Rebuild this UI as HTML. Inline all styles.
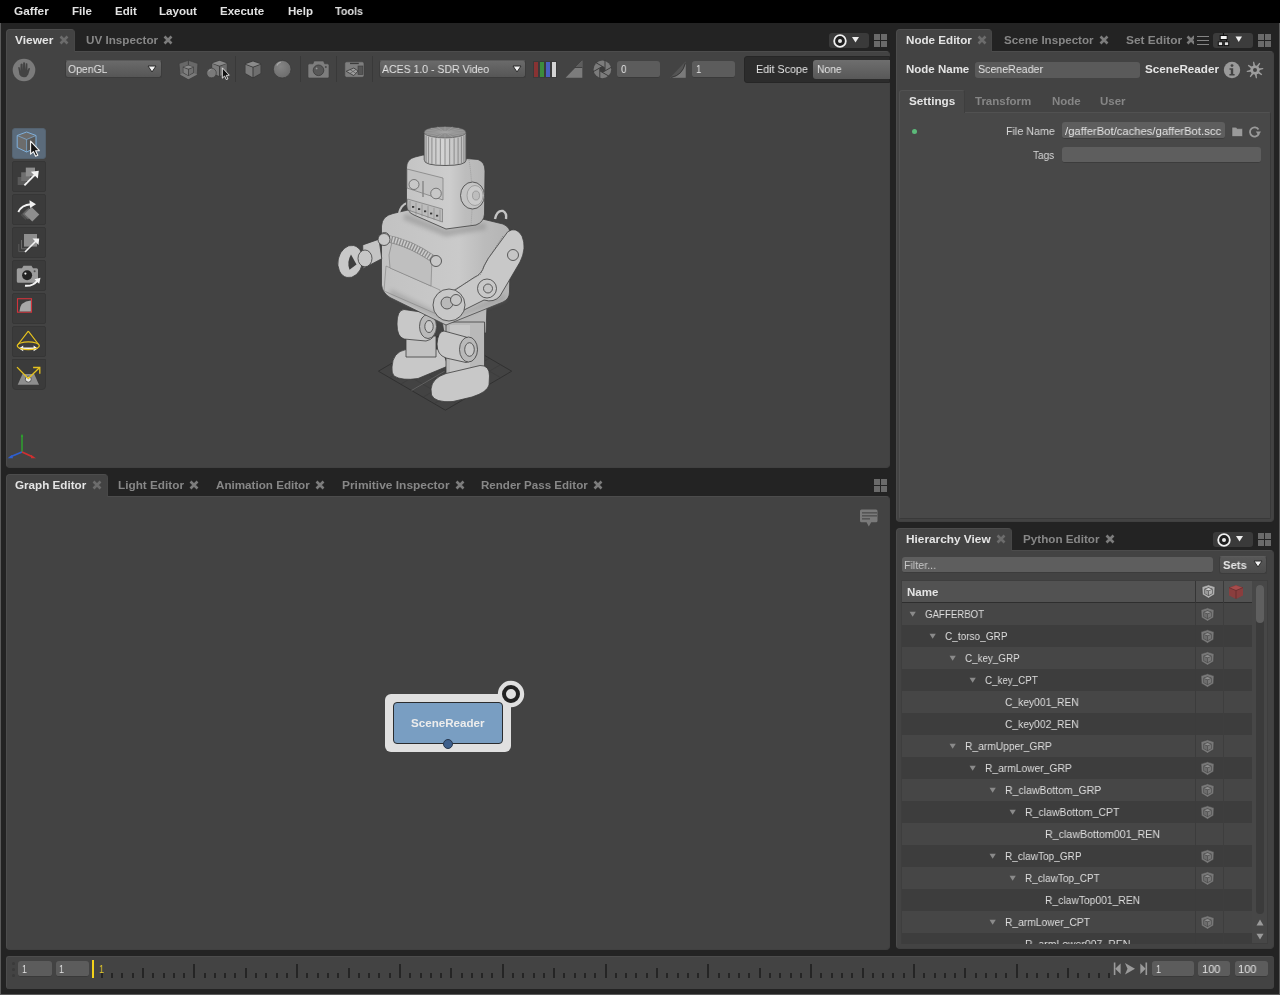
<!DOCTYPE html>
<html><head><meta charset="utf-8"><style>
*{margin:0;padding:0;box-sizing:border-box}
html,body{width:1280px;height:995px;overflow:hidden;background:#232323;font-family:"Liberation Sans",sans-serif;font-size:11px;color:#e0e0e0}
.a{position:absolute}
.t{position:absolute;white-space:nowrap;line-height:1;transform-origin:0 0;will-change:transform}
svg{position:absolute;overflow:visible}
</style></head><body>
<div class="a" style="left:0px;top:0px;width:1280px;height:23px;background:#000;"></div><div class="a" style="left:0px;top:23px;width:1px;height:972px;background:#5a5a5a;"></div><div class="a" style="left:1279px;top:23px;width:1px;height:972px;background:#5a5a5a;"></div><div class="a" style="left:0px;top:994px;width:1280px;height:1px;background:#5a5a5a;"></div><div class="t" style="left:14.00px;top:6.00px;font-size:11.5px;color:#e2e2e2;font-weight:bold;transform:scaleX(1.0258);">Gaffer</div><div class="t" style="left:71.50px;top:6.00px;font-size:11.5px;color:#e2e2e2;font-weight:bold;transform:scaleX(0.9811);">File</div><div class="t" style="left:114.50px;top:6.00px;font-size:11.5px;color:#e2e2e2;font-weight:bold;transform:scaleX(0.9885);">Edit</div><div class="t" style="left:159.00px;top:6.00px;font-size:11.5px;color:#e2e2e2;font-weight:bold;transform:scaleX(1.0066);">Layout</div><div class="t" style="left:220.30px;top:6.00px;font-size:11.5px;color:#e2e2e2;font-weight:bold;transform:scaleX(0.9904);">Execute</div><div class="t" style="left:287.50px;top:6.00px;font-size:11.5px;color:#e2e2e2;font-weight:bold;transform:scaleX(0.9849);">Help</div><div class="t" style="left:335.00px;top:6.00px;font-size:11.5px;color:#e2e2e2;font-weight:bold;transform:scaleX(0.9372);">Tools</div><div class="a" style="left:6px;top:51px;width:884px;height:417px;background:#434343;border-top:1px solid #4c4c4c;border-left:1px solid #4c4c4c;border-right:1px solid #414141;border-bottom:1px solid #404040;border-radius:0 4px 4px 4px"></div><div class="a" style="left:6px;top:29px;width:69px;height:23px;background:#434343;border-top:1px solid #4c4c4c;border-left:1px solid #4c4c4c;border-right:1px solid #474747;border-radius:4px 4px 0 0"></div><div class="t" style="left:15.30px;top:35.00px;font-size:11.5px;color:#e4e4e4;font-weight:bold;transform:scaleX(1.0414);">Viewer</div><svg style="left:58.5px;top:35.0px" width="10" height="10"><path d="M1.5 1.5 L8.5 8.5 M8.5 1.5 L1.5 8.5" stroke="#6c6c6c" stroke-width="2.6" stroke-linecap="butt"/></svg><div class="t" style="left:85.70px;top:35.00px;font-size:11.5px;color:#878787;font-weight:bold;transform:scaleX(1.0159);">UV Inspector</div><svg style="left:162.5px;top:35.0px" width="10" height="10"><path d="M1.5 1.5 L8.5 8.5 M8.5 1.5 L1.5 8.5" stroke="#7c7c7c" stroke-width="2.6" stroke-linecap="butt"/></svg><div class="a" style="left:829px;top:33px;width:40px;height:15px;background:#3a3a3a;border-radius:3px;"></div><svg style="left:831.5px;top:32.5px" width="16" height="16"><circle cx="8" cy="8" r="5.8" fill="#1e1e1e" stroke="#f0f0f0" stroke-width="1.8"/><circle cx="8" cy="8" r="2" fill="#e8e8e8"/></svg><svg style="left:852px;top:37px" width="8" height="6"><path d="M0 0 L7 0 L3.5 5.5 Z" fill="#eeeeee"/></svg><div class="a" style="left:874px;top:34px;width:13px;height:13px"><div class="a" style="left:0;top:0;width:6px;height:6px;background:#6a6a6a"></div><div class="a" style="left:7px;top:0;width:6px;height:6px;background:#6a6a6a"></div><div class="a" style="left:0;top:7px;width:6px;height:6px;background:#6a6a6a"></div><div class="a" style="left:7px;top:7px;width:6px;height:6px;background:#6a6a6a"></div></div><svg style="left:12px;top:58px" width="24" height="24" viewBox="0 0 24 24"><circle cx="12" cy="12" r="11.3" fill="#7b7b7b"/><path d="M6.2 9.5 L6.8 9 L7.8 9.5 L8.2 13 L8.6 6 L9.8 5.5 L10.6 6 L10.8 12 L11.2 4.6 L12.3 4.3 L13 4.8 L13.2 12 L13.8 5.3 L14.9 5.2 L15.4 5.8 L15.5 12.5 L16.5 10.3 L17.6 10 L18 10.8 L16.2 16.5 Q14.8 19.5 11.8 19.3 Q8.5 19.2 7.5 16.8 Z" fill="#434343"/></svg><div class="a" style="left:65px;top:60px;width:97px;height:18px;border-radius:3px;background:linear-gradient(#6a6a6a,#565656);border:1px solid #3c3c3c;border-top-color:#5a5a5a"></div><div class="t" style="left:68.20px;top:64.00px;font-size:11.5px;color:#e4e4e4;transform:scaleX(0.9080);">OpenGL</div><svg style="left:147px;top:65px" width="10" height="8"><path d="M1 1 L9 1 L5.0 7 Z" fill="#f2f2f2" stroke="#2a2a2a" stroke-width="1" stroke-linejoin="round"/></svg><div class="a" style="left:235px;top:56px;width:1px;height:26px;background:#393939;"></div><div class="a" style="left:300px;top:56px;width:1px;height:26px;background:#393939;"></div><div class="a" style="left:336px;top:56px;width:1px;height:26px;background:#393939;"></div><div class="a" style="left:372px;top:56px;width:1px;height:26px;background:#393939;"></div><svg style="left:178px;top:60px" width="21" height="20" viewBox="0 0 21 20"><path d="M10.4 0.3 L19.9 3.5 L19.3 14.4 L10.4 19.3 L1.9 14.4 L1 3.5 Z" fill="#686868" stroke="#3c3c3c" stroke-width="0.7"/><path d="M1.9 14.4 L10.4 10.8 L19.3 14.4 L10.4 19.3 Z" fill="#7a7a7a"/><path d="M10.4 0.3 L10.4 5" stroke="#3c3c3c" stroke-width="0.9"/><path d="M10.4 5 L15.8 6.8 L15.8 13 L10.4 16 L4.8 13 L4.8 6.8 Z" fill="#404040"/><path d="M10.4 5.6 L15.2 7.1 L10.4 8.8 L5.4 7.1 Z" fill="#8a8a8a"/><path d="M5.4 7.8 L10 9.4 L10 15.2 L5.4 12.6 Z" fill="#7e7e7e"/><path d="M10.8 9.4 L15.2 7.8 L15.2 12.6 L10.8 15.2 Z" fill="#707070"/></svg><svg style="left:205px;top:59px" width="25" height="22" viewBox="0 0 25 22"><path d="M14.5 1 L22.5 3.5 L22.5 14.5 L14.5 18 L6.5 14.5 L6.5 3.5 Z" fill="#3e3e3e"/><path d="M14.5 1.8 L21.8 4.2 L14.5 6.8 L7.2 4.2 Z" fill="#888"/><path d="M7.2 4.8 L14 7.4 L14 17 L7.2 14 Z" fill="#7a7a7a"/><path d="M15 7.4 L21.8 4.8 L21.8 14 L15 17 Z" fill="#6c6c6c"/><circle cx="6.5" cy="14" r="4.8" fill="#7a7a7a" stroke="#3e3e3e" stroke-width="0.7"/><path d="M3.8 12.5 Q4.5 10.5 6.5 10.2" stroke="#a0a0a0" stroke-width="0.8" fill="none"/><path d="M17.3 8.8 L17.3 19.2 L19.6 17 L21.3 20.6 L22.9 19.9 L21.3 16.4 L24.3 16.2 Z" fill="#111" stroke="#eee" stroke-width="0.9" stroke-linejoin="round"/></svg><svg style="left:244px;top:60px" width="18" height="19" viewBox="0 0 18 19"><path d="M9 0.6 L17.2 3.4 L17.2 13.6 L9 18.4 L0.8 13.6 L0.8 3.4 Z" fill="#3a3a3a"/><path d="M9 1.5 L16.3 4 L9 6.8 L1.7 4 Z" fill="#8a8a8a"/><path d="M1.5 4.8 L8.5 7.5 L8.5 17.3 L1.5 13.2 Z" fill="#7c7c7c"/><path d="M9.5 7.5 L16.5 4.8 L16.5 13.2 L9.5 17.3 Z" fill="#6e6e6e"/></svg><svg style="left:272px;top:59px" width="21" height="21" viewBox="0 0 21 21"><defs><radialGradient id="sg" cx="0.4" cy="0.35" r="0.7"><stop offset="0" stop-color="#858585"/><stop offset="1" stop-color="#6c6c6c"/></radialGradient></defs><circle cx="10.2" cy="10.2" r="8.8" fill="url(#sg)" stroke="#3c3c3c" stroke-width="0.8"/><path d="M4.8 6.5 Q6 4 8.8 3.2" stroke="#a8a8a8" stroke-width="1.2" fill="none"/></svg><svg style="left:307px;top:60px" width="23" height="20" viewBox="0 0 23 20"><path d="M2.5 3.8 L6 3.8 L7 1 L16.5 1 L17.7 3.8 L20.5 3.8 Q22 3.8 22 5.3 L22 16.5 Q22 18 20.5 18 L2.5 18 Q1 18 1 16.5 L1 5.3 Q1 3.8 2.5 3.8 Z" fill="#7e7e7e" stroke="#3e3e3e" stroke-width="0.6"/><circle cx="11.5" cy="10.3" r="5.3" fill="#585858" stroke="#3a3a3a" stroke-width="0.8"/><circle cx="9.6" cy="8.4" r="0.9" fill="#9a9a9a"/><circle cx="18.8" cy="7" r="1" fill="#4a4a4a"/></svg><svg style="left:344px;top:61px" width="21" height="17" viewBox="0 0 21 17"><rect x="0.8" y="0.8" width="19.2" height="15.5" rx="1.8" fill="#7e7e7e" stroke="#3e3e3e" stroke-width="0.6"/><rect x="6" y="1.8" width="8.8" height="1.3" fill="#3c3c3c"/><rect x="14" y="5" width="4.8" height="8.4" fill="#555" stroke="#3a3a3a" stroke-width="0.6"/><path d="M2.2 10.3 L9.8 7 L14 10 L9.8 14.6 Z" fill="#a0a0a0" stroke="#3e3e3e" stroke-width="0.9"/><path d="M6 8.6 L11.9 12.3 M11.9 8.5 L6 12.4" stroke="#4a4a4a" stroke-width="0.6"/></svg><div class="a" style="left:379px;top:60px;width:147px;height:18px;border-radius:3px;background:linear-gradient(#6a6a6a,#565656);border:1px solid #3c3c3c;border-top-color:#5a5a5a"></div><div class="t" style="left:381.90px;top:64.00px;font-size:11.5px;color:#e4e4e4;transform:scaleX(0.9125);">ACES 1.0 - SDR Video</div><svg style="left:512px;top:65px" width="10" height="8"><path d="M1 1 L9 1 L5.0 7 Z" fill="#f2f2f2" stroke="#2a2a2a" stroke-width="1" stroke-linejoin="round"/></svg><div class="a" style="left:533px;top:61px;width:5.5px;height:17px;background:#883333;border:0.5px solid #3a3a3a"></div><div class="a" style="left:539px;top:61px;width:5.5px;height:17px;background:#3d8c3d;border:0.5px solid #3a3a3a"></div><div class="a" style="left:545px;top:61px;width:5.5px;height:17px;background:#4a5fc0;border:0.5px solid #3a3a3a"></div><div class="a" style="left:551px;top:61px;width:5.5px;height:17px;background:#d4d4d4;border:0.5px solid #3a3a3a"></div><svg style="left:565px;top:60px" width="18" height="18" viewBox="0 0 18 18"><path d="M0.6 17.8 L17.3 17.8 L17.3 0.5 Z" fill="#7c7c7c"/><path d="M10.3 7.5 L17.3 0.5 L17.3 7.5 Z" fill="#5e5e5e"/><path d="M9.5 7.5 L17.3 7.5" stroke="#3c3c3c" stroke-width="0.9"/></svg><svg style="left:593px;top:60px" width="19" height="19" viewBox="0 0 19 19"><circle cx="9.4" cy="9.4" r="8.8" fill="#7c7c7c"/><circle cx="9.4" cy="9.4" r="2.6" fill="#3c3c3c"/><g stroke="#3c3c3c" stroke-width="1"><path d="M12.00 10.40 L12.00 -0.10"/><path d="M9.83 12.15 L18.93 6.90"/><path d="M7.23 11.15 L16.33 16.40"/><path d="M6.80 8.40 L6.80 18.90"/><path d="M8.97 6.65 L-0.13 11.90"/><path d="M11.57 7.65 L2.47 2.40"/></g></svg><div class="a" style="left:617px;top:61px;width:43px;height:17px;background:#5c5c5c;border-radius:3px;border-bottom:1px solid #3a3a3a"></div><div class="t" style="left:620.50px;top:64.00px;font-size:11.5px;color:#e4e4e4;transform:scaleX(0.8627);">0</div><svg style="left:669px;top:60px" width="18" height="19" viewBox="0 0 18 19"><path d="M1 17.7 L16.7 17.7 L16.7 1.2 Z" fill="#545454"/><path d="M2.5 17.7 Q13.5 15.5 16.7 3.5 L16.7 17.7 Z" fill="#7a7a7a"/><path d="M2.2 17.4 Q13.5 15.2 16.2 3.2" stroke="#383838" stroke-width="1" fill="none"/></svg><div class="a" style="left:692px;top:61px;width:43px;height:17px;background:#5c5c5c;border-radius:3px;border-bottom:1px solid #3a3a3a"></div><div class="t" style="left:695.60px;top:64.00px;font-size:11.5px;color:#e4e4e4;transform:scaleX(0.8471);">1</div><div class="a" style="left:744px;top:56px;width:146px;height:27px;background:#2c2c2c;border-radius:3px 0 0 3px;border:1px solid #262626"></div><div class="t" style="left:755.50px;top:64.00px;font-size:11.5px;color:#e4e4e4;transform:scaleX(0.9330);">Edit Scope</div><div class="a" style="left:813px;top:60px;width:77px;height:19px;border-radius:3px 0 0 3px;background:linear-gradient(#6e6e6e,#585858)"></div><div class="t" style="left:816.60px;top:64.00px;font-size:11.5px;color:#e4e4e4;transform:scaleX(0.8982);">None</div><div class="a" style="left:12px;top:128px;width:34px;height:31px;background:#5b6b7b;border-radius:3px;border:1px solid #54626f"></div><div class="a" style="left:12px;top:161px;width:34px;height:31px;background:#3b3b3b;border-radius:2px;border:1px solid #363636"></div><div class="a" style="left:12px;top:194px;width:34px;height:31px;background:#3b3b3b;border-radius:2px;border:1px solid #363636"></div><div class="a" style="left:12px;top:227px;width:34px;height:31px;background:#3b3b3b;border-radius:2px;border:1px solid #363636"></div><div class="a" style="left:12px;top:260px;width:34px;height:31px;background:#3b3b3b;border-radius:2px;border:1px solid #363636"></div><div class="a" style="left:12px;top:293px;width:34px;height:31px;background:#3b3b3b;border-radius:2px;border:1px solid #363636"></div><div class="a" style="left:12px;top:326px;width:34px;height:31px;background:#3b3b3b;border-radius:2px;border:1px solid #363636"></div><div class="a" style="left:12px;top:359px;width:34px;height:31px;background:#3b3b3b;border-radius:0 0 4px 4px;border:1px solid #363636"></div><svg style="left:12px;top:128px" width="34" height="31" viewBox="0 0 34 31"><path d="M5.2 7.5 L14.6 4 L24 7.5 L24 19.5 L14.6 24 L5.2 19.5 Z" fill="#6c6c6c"/><path d="M14.6 11.5 L24 7.5 L24 19.5 L14.6 24 Z" fill="#575757"/><path d="M5.2 7.5 L14.6 11.5 L24 7.5 M14.6 11.5 L14.6 24" stroke="#7fb0dc" stroke-width="0.7" fill="none"/><path d="M5.2 7.5 L14.6 4 L24 7.5 L24 19.5 L14.6 24 L5.2 19.5 Z" fill="none" stroke="#7fb0dc" stroke-width="1"/><path d="M18.6 13.2 L18.6 26.2 L21.4 23.6 L23.6 28.2 L25.8 27.2 L23.6 22.8 L27.4 22.6 Z" fill="#151515" stroke="#f4f4f4" stroke-width="1.1" stroke-linejoin="round"/></svg><svg style="left:12px;top:161px" width="34" height="31" viewBox="0 0 34 31"><rect x="5.7" y="16" width="8.3" height="8" fill="#595959"/><rect x="9.2" y="11.3" width="8.8" height="8.7" fill="#6f6f6f"/><rect x="13.8" y="6.6" width="9.2" height="8.8" fill="#8e8e8e"/><path d="M12.4 24.3 L23.5 13.2" stroke="#f2f2f2" stroke-width="1.9"/><path d="M18.8 10.8 L26.8 9.8 L25.8 17.6 Z" fill="#f2f2f2"/></svg><svg style="left:12px;top:194px" width="34" height="31" viewBox="0 0 34 31"><path d="M8.5 21 L14.5 15 L19.5 20 L13.5 26 Z" fill="#4c4c4c"/><path d="M10.5 20 L16.5 14 L22 19.5 L16 25.5 Z" fill="#666"/><path d="M12.5 20 L19.5 13 L27.3 20.5 L20.3 27.5 Z" fill="#8e8e8e"/><path d="M6.3 18 Q9.5 10.8 19 10.2" stroke="#f2f2f2" stroke-width="1.9" fill="none"/><path d="M17.5 6.2 L24 10.2 L18 14 Z" fill="#f2f2f2"/></svg><svg style="left:12px;top:227px" width="34" height="31" viewBox="0 0 34 31"><path d="M6.8 17 L6.8 24.6 L14.5 24.6" stroke="#5a5a5a" stroke-width="1" fill="none"/><path d="M9.5 13 L9.5 21.8 L17 21.8" stroke="#6a6a6a" stroke-width="1" fill="none"/><rect x="12" y="7" width="13" height="12.6" fill="#8e8e8e"/><path d="M13 25 L24.5 13.5" stroke="#f2f2f2" stroke-width="1.6"/><path d="M20.5 11.5 L27.2 11.5 L26.5 18 Z" fill="#f2f2f2"/></svg><svg style="left:12px;top:260px" width="34" height="31" viewBox="0 0 34 31"><path d="M6.3 8.2 L10 8.2 L11.5 5.7 L19.5 5.7 L21 8.2 L24.5 8.2 Q26 8.2 26 9.7 L26 21.3 Q26 22.8 24.5 22.8 L6.3 22.8 Q4.8 22.8 4.8 21.3 L4.8 9.7 Q4.8 8.2 6.3 8.2 Z" fill="#9c9c9c"/><circle cx="15.1" cy="15.3" r="5" fill="#232323"/><circle cx="13.4" cy="13.6" r="1.1" fill="#eee"/><circle cx="22.6" cy="11.3" r="1" fill="#555"/><path d="M13 25.8 Q21 26.5 25.5 20.5" stroke="#f4f4f4" stroke-width="2" fill="none"/><path d="M22.5 19.3 L28.5 17.8 L27.2 23.8 Z" fill="#f4f4f4"/></svg><svg style="left:12px;top:293px" width="34" height="31" viewBox="0 0 34 31"><rect x="5.5" y="5.7" width="14" height="13.5" fill="none" stroke="#d0343c" stroke-width="1.1"/><path d="M7.5 18.6 Q7.8 8.3 18.9 7.6 L18.9 18.6 Z" fill="#a8a8a8"/></svg><svg style="left:12px;top:326px" width="34" height="31" viewBox="0 0 34 31"><path d="M16.3 5.2 L6 18.5 M16.3 5.2 L26.6 18.5" stroke="#e6c21e" stroke-width="1.2" fill="none"/><path d="M8.6 22.4 L24 22.4" stroke="#f4f4f4" stroke-width="1.8"/><path d="M7 22.4 L11.2 19.6 L11.2 25.2 Z M25.8 22.4 L21.6 19.6 L21.6 25.2 Z" fill="#f4f4f4"/><ellipse cx="16.3" cy="19.8" rx="11" ry="3.9" fill="none" stroke="#e6c21e" stroke-width="1.2"/></svg><svg style="left:12px;top:359px" width="34" height="31" viewBox="0 0 34 31"><path d="M5.7 25.7 L10.5 15 L22.2 15 L27 25.7 Z" fill="#8e8e8e"/><circle cx="16.3" cy="20.2" r="3" fill="#e4e4e4" stroke="#555" stroke-width="1"/><path d="M5 8.1 L16.3 19.5 L27.6 8.5" stroke="#e6c21e" stroke-width="1.3" fill="none"/><path d="M21.1 8.5 L27.8 8.5 L27.8 14.7" stroke="#e6c21e" stroke-width="1.3" fill="none"/></svg><svg style="left:0px;top:425px" width="45" height="40" viewBox="0 0 45 40"><path d="M22 27 L22 10" stroke="#2ea02e" stroke-width="1.5"/><path d="M20.8 12 L22 8.5 L23.2 12 Z" fill="#2ea02e"/><path d="M22 27 L10 32" stroke="#2e5fd0" stroke-width="1.8"/><path d="M12 30 L7.5 33.2 L13 33.3 Z" fill="#2e5fd0"/><path d="M22 27 L33 32" stroke="#d03030" stroke-width="1.8"/><path d="M31 30 L36 33.2 L31 33.3 Z" fill="#d03030"/></svg><svg style="left:0px;top:0px" width="1280" height="995" viewBox="0 0 1280 995"><defs><linearGradient id="crg" x1="0" x2="1"><stop offset="0" stop-color="#bdbdbd"/><stop offset="0.35" stop-color="#d2d2d2"/><stop offset="1" stop-color="#b0b0b0"/></linearGradient><linearGradient id="hdg" x1="0" x2="1"><stop offset="0" stop-color="#c4c4c4"/><stop offset="0.55" stop-color="#cdcdcd"/><stop offset="0.75" stop-color="#bdbdbd"/><stop offset="1" stop-color="#b6b6b6"/></linearGradient><linearGradient id="tog" x1="0" x2="1"><stop offset="0" stop-color="#c2c2c2"/><stop offset="0.6" stop-color="#cacaca"/><stop offset="0.8" stop-color="#bbbbbb"/><stop offset="1" stop-color="#b4b4b4"/></linearGradient></defs><g stroke="#2c2c2c" stroke-width="0.8" fill="none"><path d="M378.4,371.2 L444.7,332.2 L511.7,371.2 L445.4,410.2 Z"/><path d="M389.4,364.7 L456.4,403.7" stroke-width="0.5" stroke="#393939"/><path d="M389.6,377.7 L455.9,338.7" stroke-width="0.5" stroke="#393939"/><path d="M400.5,358.2 L467.5,397.2" stroke-width="0.5" stroke="#393939"/><path d="M400.7,384.2 L467.0,345.2" stroke-width="0.5" stroke="#393939"/><path d="M411.5,351.7 L478.5,390.7" stroke-width="0.5" stroke="#393939"/><path d="M411.9,390.7 L478.2,351.7" stroke-width="0.5" stroke="#393939"/><path d="M422.6,345.2 L489.6,384.2" stroke-width="0.5" stroke="#393939"/><path d="M423.1,397.2 L489.4,358.2" stroke-width="0.5" stroke="#393939"/><path d="M433.6,338.7 L500.6,377.7" stroke-width="0.5" stroke="#393939"/><path d="M434.2,403.7 L500.5,364.7" stroke-width="0.5" stroke="#393939"/></g><path d="M411.5,390.5 L444.7,371.2" stroke="#6a6a6a" stroke-width="0.8"/><path d="M392,367 Q392.5,352 406,349.5 L442,349 L448,366 L418,378.5 Q402,381 394,376 Q391.5,373 392,367 Z" fill="#c8c8c8" stroke="#3c3c3c" stroke-width="0.8"/><path d="M406,336 L436,336 L436,357 L406,357 Z" fill="#c2c2c2" stroke="#3c3c3c" stroke-width="0.8"/><path d="M404,309.5 L428,313 Q437,316 437,327 Q436,339 426,341 L404,339 Q397,337 397,324 Q397,310 404,309.5 Z" fill="#c8c8c8" stroke="#3c3c3c" stroke-width="0.8"/><ellipse cx="428" cy="326.5" rx="8.5" ry="12" fill="#b9b9b9" stroke="#3c3c3c" stroke-width="0.8"/><ellipse cx="429" cy="326.5" rx="4.2" ry="6" fill="#c9c9c9" stroke="#3c3c3c" stroke-width="0.8"/><path d="M441,314 L487,305 L486,333 L444,333 Z" fill="#b9b9b9" stroke="#3c3c3c" stroke-width="0.8"/><path d="M446,322 L484.5,322 L484.5,380 L446,380 Z" fill="#b9b9b9" stroke="#3c3c3c" stroke-width="0.8"/><path d="M450,325 L470,325 L470,378 L450,378 Z" fill="#c6c6c6"/><path d="M431,389 Q432,378 446,373.5 L480,365.5 Q489.5,365 489.5,376 L489,385 Q487.5,392 472,397 L453,401.5 Q435,403 431.5,395 Z" fill="#c8c8c8" stroke="#3c3c3c" stroke-width="0.8"/><path d="M444,331 L466,337 Q477,341 477,350 Q476,361 466,362.5 L446,358 Q437,355 437,344 Q438,331 444,331 Z" fill="#c8c8c8" stroke="#3c3c3c" stroke-width="0.8"/><ellipse cx="468.5" cy="349.5" rx="9" ry="12.5" fill="#b9b9b9" stroke="#3c3c3c" stroke-width="0.8"/><ellipse cx="469.5" cy="349.5" rx="4.8" ry="6.8" fill="#c8c8c8" stroke="#3c3c3c" stroke-width="0.8"/><path d="M381.5,226 Q382,216 393,213.5 L408,210 L470,216 L503,224 Q511,227.5 510.5,236 L509.5,292 Q509.5,299 503,302 L446,325 L390,297.5 Q382.5,293 381.5,285 Z" fill="url(#tog)" stroke="#3c3c3c" stroke-width="0.8"/><defs><filter id="bl" x="-20%" y="-50%" width="140%" height="200%"><feGaussianBlur stdDeviation="2.2"/></filter></defs><path d="M404,216 L446,233 L486,226" stroke="#8e8e8e" stroke-width="7" fill="none" opacity="0.55" filter="url(#bl)"/><path d="M390,292 L446,320 L505,297" stroke="#8e8e8e" stroke-width="6" fill="none" opacity="0.45" filter="url(#bl)"/><path d="M384,291 L386,266 L440,290 L441,316 Z" fill="none" stroke="#808080" stroke-width="0.6"/><path d="M389,255 L392,242 L432,258 L431,286 L390,268 Z" fill="#bfbfbf" stroke="#7a7a7a" stroke-width="0.6"/><path d="M384,238 Q410,242 436,261" stroke="#8c8c8c" stroke-width="7.5" fill="none"/><path d="M384,238 Q410,242 436,261" stroke="#cccccc" stroke-width="6" stroke-dasharray="1.6 1.3" fill="none"/><circle cx="384.5" cy="237.5" r="5" fill="#c8c8c8" stroke="#3c3c3c" stroke-width="0.8"/><circle cx="436" cy="261" r="5.5" fill="#c8c8c8" stroke="#3c3c3c" stroke-width="0.8"/><path d="M495,219 Q497,210 503,211 Q507,213 506,219" stroke="#c4c4c4" stroke-width="2.4" fill="none"/><path d="M507.8,231.7 Q516,226 522,236 Q527,248 520,262 L500,296 Q494,303 484,300 L458,313 Q447,318 440,311 Q437,302 446,296 L474,277.5 Q482,274 484,266 L488.4,258.2 Z" fill="#c8c8c8" stroke="#3c3c3c" stroke-width="0.8"/><path d="M503,236 L486,262 L481,274 L452,291" stroke="#6a6a6a" stroke-width="0.7" fill="none" stroke-dasharray="1 1.2"/><circle cx="513" cy="255" r="5.5" fill="#c6c6c6" stroke="#3c3c3c" stroke-width="0.8"/><circle cx="487" cy="288.5" r="9.5" fill="#c8c8c8" stroke="#3c3c3c" stroke-width="0.8"/><circle cx="488" cy="288.5" r="4.5" fill="#c4c4c4" stroke="#3c3c3c" stroke-width="0.8"/><circle cx="449" cy="305" r="16" fill="#c8c8c8" stroke="#3c3c3c" stroke-width="0.8"/><circle cx="447" cy="303" r="6" fill="#b9b9b9" stroke="#3c3c3c" stroke-width="0.8"/><circle cx="456" cy="300" r="5.5" fill="#c6c6c6" stroke="#3c3c3c" stroke-width="0.8"/><path d="M362.7,244.9 L379,239.2 L381.8,258.7 L363.3,268.4 Z" fill="#c4c4c4" stroke="#3c3c3c" stroke-width="0.8"/><ellipse cx="350.3" cy="261.5" rx="12.3" ry="16.3" transform="rotate(12 350.3 261.5)" fill="#c8c8c8" stroke="#3c3c3c" stroke-width="0.8"/><path d="M351,254.5 L356.5,264.5 L349.5,269.8 Q346.5,262 351,254.5 Z" fill="#3e3e3e"/><ellipse cx="365" cy="258.4" rx="7" ry="8.4" fill="#c6c6c6" stroke="#3c3c3c" stroke-width="0.8"/><circle cx="384" cy="239.5" r="6" fill="#c8c8c8" stroke="#3c3c3c" stroke-width="0.8"/><path d="M399,213 Q401,205 407,203" stroke="#c0c0c0" stroke-width="2" fill="none"/><path d="M406.5,168 Q406.5,159 415,157 L423,155 L478,159.5 Q485,162 485,171 L484.5,214 Q484,222 476,225 L446,229 L414,215 Q407,212 406.5,205 Z" fill="url(#hdg)" stroke="#3c3c3c" stroke-width="0.8"/><path d="M407,169 L443,178 L443,200 L407,188 Z" fill="#c2c2c2" stroke="#6c6c6c" stroke-width="0.6"/><circle cx="414" cy="184.5" r="5" fill="#c8c8c8" stroke="#555" stroke-width="0.7"/><circle cx="436" cy="193.5" r="5.3" fill="#c8c8c8" stroke="#555" stroke-width="0.7"/><path d="M423,181 L423,197" stroke="#888" stroke-width="1.5"/><path d="M407.5,199 L442.5,209 L442.5,222 L408,210 Z" fill="#bcbcbc" stroke="#6a6a6a" stroke-width="0.6"/><g fill="#3a3a3a"><rect x="412" y="206.0" width="2.2" height="1.8"/><rect x="418" y="208.2" width="2.2" height="1.8"/><rect x="424" y="210.4" width="2.2" height="1.8"/><rect x="430" y="212.6" width="2.2" height="1.8"/><rect x="436" y="214.8" width="2.2" height="1.8"/></g><g stroke="#7a7a7a" stroke-width="0.5"><path d="M410,201.0 L410,213.0"/><path d="M416,202.7 L416,214.7"/><path d="M422,204.4 L422,216.4"/><path d="M428,206.1 L428,218.1"/><path d="M434,207.8 L434,219.8"/><path d="M440,209.5 L440,221.5"/></g><path d="M469,160 Q474,190 471,225" stroke="#8a8a8a" stroke-width="0.6" fill="none" stroke-dasharray="1 1"/><ellipse cx="472.5" cy="195.5" rx="12" ry="13.5" fill="#c4c4c4" stroke="#3c3c3c" stroke-width="0.8"/><ellipse cx="475" cy="195.5" rx="8" ry="10" fill="#cbcbcb" stroke="#777" stroke-width="0.5"/><ellipse cx="476" cy="195.5" rx="3.5" ry="4.5" fill="#bdbdbd" stroke="#777" stroke-width="0.5"/><defs><linearGradient id="crg2" x1="0" x2="1"><stop offset="0" stop-color="#c4c4c4"/><stop offset="0.45" stop-color="#d4d4d4"/><stop offset="1" stop-color="#bababa"/></linearGradient></defs><path d="M424.2,132 L424.2,160 Q424.2,165.5 445,165.5 Q466.2,165.5 466.2,160 L466.2,132 Z" fill="url(#crg2)" stroke="#3c3c3c" stroke-width="0.8"/><g stroke="#7c7c7c" stroke-width="0.8"><path d="M424.53,134.29 L424.53,161.11"/><path d="M426.08,135.52 L426.08,162.17"/><path d="M428.58,136.62 L428.58,163.12"/><path d="M431.91,137.53 L431.91,163.91"/><path d="M435.89,138.23 L435.89,164.50"/><path d="M440.33,138.65 L440.33,164.87"/><path d="M445.00,138.80 L445.00,165.00"/><path d="M449.67,138.65 L449.67,164.87"/><path d="M454.11,138.23 L454.11,164.50"/><path d="M458.09,137.53 L458.09,163.91"/><path d="M461.42,136.62 L461.42,163.12"/><path d="M463.92,135.52 L463.92,162.17"/><path d="M465.47,134.29 L465.47,161.11"/></g><ellipse cx="445" cy="132.2" rx="21" ry="5.8" fill="#8c8c8c" stroke="#4a4a4a" stroke-width="0.6"/><g stroke="#a6a6a6" stroke-width="0.6"><path d="M445,132.2 L465.0,132.2"/><path d="M445,132.2 L463.5,134.3"/><path d="M445,132.2 L459.1,136.1"/><path d="M445,132.2 L452.7,137.3"/><path d="M445,132.2 L445.0,137.7"/><path d="M445,132.2 L437.3,137.3"/><path d="M445,132.2 L430.9,136.1"/><path d="M445,132.2 L426.5,134.3"/><path d="M445,132.2 L425.0,132.2"/><path d="M445,132.2 L426.5,130.1"/><path d="M445,132.2 L430.9,128.3"/><path d="M445,132.2 L437.3,127.1"/><path d="M445,132.2 L445.0,126.7"/><path d="M445,132.2 L452.7,127.1"/><path d="M445,132.2 L459.1,128.3"/><path d="M445,132.2 L463.5,130.1"/></g></svg><div class="a" style="left:6px;top:496px;width:884px;height:454px;background:#434343;border-top:1px solid #4c4c4c;border-left:1px solid #4c4c4c;border-right:1px solid #414141;border-bottom:1px solid #404040;border-radius:0 4px 4px 4px"></div><div class="a" style="left:6px;top:474px;width:102px;height:23px;background:#434343;border-top:1px solid #4c4c4c;border-left:1px solid #4c4c4c;border-right:1px solid #474747;border-radius:4px 4px 0 0"></div><div class="t" style="left:15.00px;top:480.00px;font-size:11.5px;color:#e4e4e4;font-weight:bold;transform:scaleX(1.0142);">Graph Editor</div><svg style="left:91.5px;top:480.0px" width="10" height="10"><path d="M1.5 1.5 L8.5 8.5 M8.5 1.5 L1.5 8.5" stroke="#6c6c6c" stroke-width="2.6" stroke-linecap="butt"/></svg><div class="t" style="left:118.25px;top:480.00px;font-size:11.5px;color:#878787;font-weight:bold;transform:scaleX(1.0233);">Light Editor</div><svg style="left:189.25px;top:480.0px" width="10" height="10"><path d="M1.5 1.5 L8.5 8.5 M8.5 1.5 L1.5 8.5" stroke="#7c7c7c" stroke-width="2.6" stroke-linecap="butt"/></svg><div class="t" style="left:216.25px;top:480.00px;font-size:11.5px;color:#878787;font-weight:bold;transform:scaleX(1.0121);">Animation Editor</div><svg style="left:314.5px;top:480.0px" width="10" height="10"><path d="M1.5 1.5 L8.5 8.5 M8.5 1.5 L1.5 8.5" stroke="#7c7c7c" stroke-width="2.6" stroke-linecap="butt"/></svg><div class="t" style="left:342.00px;top:480.00px;font-size:11.5px;color:#878787;font-weight:bold;transform:scaleX(1.0386);">Primitive Inspector</div><svg style="left:454.5px;top:480.0px" width="10" height="10"><path d="M1.5 1.5 L8.5 8.5 M8.5 1.5 L1.5 8.5" stroke="#7c7c7c" stroke-width="2.6" stroke-linecap="butt"/></svg><div class="t" style="left:481.25px;top:480.00px;font-size:11.5px;color:#878787;font-weight:bold;transform:scaleX(1.0059);">Render Pass Editor</div><svg style="left:592.5px;top:480.0px" width="10" height="10"><path d="M1.5 1.5 L8.5 8.5 M8.5 1.5 L1.5 8.5" stroke="#7c7c7c" stroke-width="2.6" stroke-linecap="butt"/></svg><div class="a" style="left:874px;top:479px;width:13px;height:13px"><div class="a" style="left:0;top:0;width:6px;height:6px;background:#6a6a6a"></div><div class="a" style="left:7px;top:0;width:6px;height:6px;background:#6a6a6a"></div><div class="a" style="left:0;top:7px;width:6px;height:6px;background:#6a6a6a"></div><div class="a" style="left:7px;top:7px;width:6px;height:6px;background:#6a6a6a"></div></div><div class="a" style="left:896px;top:51px;width:378px;height:471px;background:#434343;border-top:1px solid #4c4c4c;border-left:1px solid #4c4c4c;border-right:1px solid #414141;border-bottom:1px solid #404040;border-radius:0 4px 4px 4px"></div><div class="a" style="left:896px;top:29px;width:96px;height:23px;background:#434343;border-top:1px solid #4c4c4c;border-left:1px solid #4c4c4c;border-right:1px solid #474747;border-radius:4px 4px 0 0"></div><div class="t" style="left:905.70px;top:35.00px;font-size:11.5px;color:#e4e4e4;font-weight:bold;transform:scaleX(1.0104);">Node Editor</div><svg style="left:976.5px;top:35.0px" width="10" height="10"><path d="M1.5 1.5 L8.5 8.5 M8.5 1.5 L1.5 8.5" stroke="#6c6c6c" stroke-width="2.6" stroke-linecap="butt"/></svg><div class="t" style="left:1003.80px;top:35.00px;font-size:11.5px;color:#878787;font-weight:bold;transform:scaleX(1.0082);">Scene Inspector</div><svg style="left:1098.5px;top:35.0px" width="10" height="10"><path d="M1.5 1.5 L8.5 8.5 M8.5 1.5 L1.5 8.5" stroke="#7c7c7c" stroke-width="2.6" stroke-linecap="butt"/></svg><div class="t" style="left:1125.70px;top:35.00px;font-size:11.5px;color:#878787;font-weight:bold;transform:scaleX(1.0354);">Set Editor</div><svg style="left:1185.5px;top:35.0px" width="10" height="10"><path d="M1.5 1.5 L8.5 8.5 M8.5 1.5 L1.5 8.5" stroke="#7c7c7c" stroke-width="2.6" stroke-linecap="butt"/></svg><div class="a" style="left:1194px;top:29px;width:19px;height:22px;background:#232323;"></div><div class="a" style="left:1197px;top:35.6px;width:12px;height:1.6000000000000014px;background:#858585;"></div><div class="a" style="left:1197px;top:39.6px;width:12px;height:1.6000000000000014px;background:#858585;"></div><div class="a" style="left:1197px;top:43.6px;width:12px;height:1.6000000000000014px;background:#858585;"></div><div class="a" style="left:1213px;top:33px;width:40px;height:15px;background:#3c3c3c;border-radius:3px;"></div><svg style="left:1216px;top:32px" width="16" height="16" viewBox="0 0 16 16"><path d="M7.5 1 L7.5 4" stroke="#111" stroke-width="1"/><rect x="4.2" y="3.5" width="7" height="4" fill="#f0f0f0" stroke="#111" stroke-width="1"/><path d="M5 8 L5 10 M10.5 8 L10.5 10" stroke="#111" stroke-width="1"/><rect x="2.3" y="9.8" width="4.4" height="3.8" fill="#e0e0e0" stroke="#111" stroke-width="1"/><rect x="8.3" y="9.8" width="4.4" height="3.8" fill="#e0e0e0" stroke="#111" stroke-width="1"/></svg><svg style="left:1235px;top:36px" width="8" height="7"><path d="M0.5 0.5 L7 0.5 L3.75 6 Z" fill="#f0f0f0"/></svg><div class="a" style="left:1258px;top:34px;width:13px;height:13px"><div class="a" style="left:0;top:0;width:6px;height:6px;background:#6a6a6a"></div><div class="a" style="left:7px;top:0;width:6px;height:6px;background:#6a6a6a"></div><div class="a" style="left:0;top:7px;width:6px;height:6px;background:#6a6a6a"></div><div class="a" style="left:7px;top:7px;width:6px;height:6px;background:#6a6a6a"></div></div><div class="a" style="left:896px;top:550px;width:378px;height:399px;background:#434343;border-top:1px solid #4c4c4c;border-left:1px solid #4c4c4c;border-right:1px solid #414141;border-bottom:1px solid #404040;border-radius:0 4px 4px 4px"></div><div class="a" style="left:896px;top:528px;width:116px;height:23px;background:#434343;border-top:1px solid #4c4c4c;border-left:1px solid #4c4c4c;border-right:1px solid #474747;border-radius:4px 4px 0 0"></div><div class="t" style="left:905.50px;top:534.00px;font-size:11.5px;color:#e4e4e4;font-weight:bold;transform:scaleX(1.0286);">Hierarchy View</div><svg style="left:995.5px;top:534.0px" width="10" height="10"><path d="M1.5 1.5 L8.5 8.5 M8.5 1.5 L1.5 8.5" stroke="#6c6c6c" stroke-width="2.6" stroke-linecap="butt"/></svg><div class="t" style="left:1022.50px;top:534.00px;font-size:11.5px;color:#878787;font-weight:bold;transform:scaleX(1.0149);">Python Editor</div><svg style="left:1104.5px;top:534.0px" width="10" height="10"><path d="M1.5 1.5 L8.5 8.5 M8.5 1.5 L1.5 8.5" stroke="#7c7c7c" stroke-width="2.6" stroke-linecap="butt"/></svg><div class="a" style="left:1213px;top:532px;width:40px;height:15px;background:#3a3a3a;border-radius:3px;"></div><svg style="left:1215.5px;top:531.5px" width="16" height="16"><circle cx="8" cy="8" r="5.8" fill="#1e1e1e" stroke="#f0f0f0" stroke-width="1.8"/><circle cx="8" cy="8" r="2" fill="#e8e8e8"/></svg><svg style="left:1236px;top:536px" width="8" height="6"><path d="M0 0 L7 0 L3.5 5.5 Z" fill="#eeeeee"/></svg><div class="a" style="left:1258px;top:533px;width:13px;height:13px"><div class="a" style="left:0;top:0;width:6px;height:6px;background:#6a6a6a"></div><div class="a" style="left:7px;top:0;width:6px;height:6px;background:#6a6a6a"></div><div class="a" style="left:0;top:7px;width:6px;height:6px;background:#6a6a6a"></div><div class="a" style="left:7px;top:7px;width:6px;height:6px;background:#6a6a6a"></div></div><div class="t" style="left:905.70px;top:64.00px;font-size:11.5px;color:#e4e4e4;font-weight:bold;">Node Name</div><div class="a" style="left:975px;top:62px;width:165px;height:16px;background:#5a5a5a;border-radius:3px"></div><div class="t" style="left:977.50px;top:64.00px;font-size:11.5px;color:#e4e4e4;transform:scaleX(0.9250);">SceneReader</div><div class="t" style="left:1145.00px;top:64.00px;font-size:11.5px;color:#e4e4e4;font-weight:bold;transform:scaleX(1.0154);">SceneReader</div><svg style="left:1223px;top:61px" width="18" height="18" viewBox="0 0 18 18"><circle cx="9" cy="9" r="8.2" fill="#9a9a9a"/><circle cx="9" cy="4.6" r="1.4" fill="#434343"/><path d="M6.5 7.2 L10.2 7.2 L10.2 13 L11.6 13 L11.6 14.5 L6.4 14.5 L6.4 13 L7.8 13 L7.8 8.7 L6.5 8.7 Z" fill="#434343"/></svg><svg style="left:1246px;top:61px" width="18" height="18" viewBox="0 0 18 18"><polygon points="7.32,5.04 6.97,0.85 8.12,0.65 9.23,4.71 10.61,5.01 13.33,1.80 14.29,2.47 12.20,6.12 12.96,7.32 17.15,6.97 17.35,8.12 13.29,9.23 12.99,10.61 16.20,13.33 15.53,14.29 11.88,12.20 10.68,12.96 11.03,17.15 9.88,17.35 8.77,13.29 7.39,12.99 4.67,16.20 3.71,15.53 5.80,11.88 5.04,10.68 0.85,11.03 0.65,9.88 4.71,8.77 5.01,7.39 1.80,4.67 2.47,3.71 6.12,5.80" fill="#9c9c9c"/><circle cx="9" cy="9" r="4.6" fill="#9c9c9c"/><circle cx="9" cy="9" r="2" fill="#434343"/></svg><div class="a" style="left:899px;top:112px;width:372px;height:407px;background:#484848;border:1px solid #515151;border-right-color:#393939;border-bottom-color:#393939;border-radius:0 2px 2px 2px"></div><div class="a" style="left:899px;top:90px;width:66px;height:23px;background:#484848;border:1px solid #515151;border-bottom:none;border-right-color:#3e3e3e;border-radius:3px 3px 0 0"></div><div class="t" style="left:908.70px;top:96.00px;font-size:11.5px;color:#e4e4e4;font-weight:bold;transform:scaleX(1.0204);">Settings</div><div class="t" style="left:975.30px;top:96.00px;font-size:11.5px;color:#868686;font-weight:bold;">Transform</div><div class="t" style="left:1051.60px;top:96.00px;font-size:11.5px;color:#868686;font-weight:bold;">Node</div><div class="t" style="left:1100.40px;top:96.00px;font-size:11.5px;color:#868686;font-weight:bold;transform:scaleX(0.9912);">User</div><div class="a" style="left:911.5px;top:128.5px;width:5px;height:5px;border-radius:50%;background:#5cba7a"></div><div class="t" style="left:1005.60px;top:126.00px;font-size:11.5px;color:#d8d8d8;transform:scaleX(0.9317);">File Name</div><div class="a" style="left:1062px;top:122px;width:163px;height:17px;background:#5e5e5e;border-radius:3px;border-bottom:1px solid #3c3c3c"></div><div class="t" style="left:1065.00px;top:126.00px;font-size:11.5px;color:#e4e4e4;transform:scaleX(0.9788);">/gafferBot/caches/gafferBot.scc</div><svg style="left:1231px;top:126px" width="13" height="12" viewBox="0 0 13 12"><path d="M1 1.2 L5 1.2 L6.2 2.6 L11.6 2.6 L11.6 10.5 L1 10.5 Z" fill="#9a9a9a" stroke="#3a3a3a" stroke-width="0.5"/></svg><svg style="left:1248px;top:125px" width="14" height="13" viewBox="0 0 14 13"><path d="M10.5 4.5 A4.6 4.6 0 1 0 10.8 8.8" stroke="#9a9a9a" stroke-width="1.8" fill="none"/><path d="M7.8 6.5 L13 6.5 L10.5 10.5 Z" fill="#9a9a9a"/></svg><div class="t" style="left:1033.30px;top:150.00px;font-size:11.5px;color:#d8d8d8;transform:scaleX(0.8701);">Tags</div><div class="a" style="left:1062px;top:147px;width:199px;height:16px;background:#5e5e5e;border-radius:3px;border-bottom:1px solid #3c3c3c"></div><div class="a" style="left:902px;top:557px;width:311px;height:16px;background:#5e5e5e;border-radius:3px;border-bottom:1px solid #3c3c3c"></div><div class="t" style="left:904.40px;top:560.00px;font-size:11.5px;color:#c8c8c8;transform:scaleX(0.9304);">Filter...</div><div class="a" style="left:1219px;top:556px;width:48px;height:18px;border-radius:3px;background:linear-gradient(#585858,#4c4c4c);border:1px solid #3c3c3c;border-top-color:#5c5c5c"></div><div class="t" style="left:1222.50px;top:560.00px;font-size:11.5px;color:#e4e4e4;font-weight:bold;transform:scaleX(0.9773);">Sets</div><svg style="left:1253px;top:560px" width="10" height="8"><path d="M1 1 L9 1 L5 7 Z" fill="#f2f2f2" stroke="#2a2a2a" stroke-width="1" stroke-linejoin="round"/></svg><div class="a" style="left:901px;top:580px;width:367px;height:364px;background:#484848;border:1px solid #3e3e3e"></div><div class="a" style="left:902px;top:581px;width:350px;height:21px;background:#525252;"></div><div class="a" style="left:902px;top:602px;width:350px;height:1px;background:#2e2e2e;"></div><div class="t" style="left:906.60px;top:587.00px;font-size:11.5px;color:#e4e4e4;font-weight:bold;">Name</div><svg style="left:1201px;top:584px" width="15" height="15" viewBox="0 0 15 15"><path d="M7.5 0.8 L14 2.8 L13.6 10.5 L7.5 14.3 L1.4 10.5 L1 2.8 Z" fill="#b0b0b0" stroke="#3c3c3c" stroke-width="0.6"/><path d="M7.5 3.2 L11.6 4.7 L11.6 9.7 L7.5 12 L3.4 9.7 L3.4 4.7 Z" fill="#4a4a4a"/><path d="M7.5 4 L11 5.2 L7.5 6.5 L4 5.2 Z" fill="#d0d0d0"/><path d="M4 5.8 L7.2 7 L7.2 11.2 L4 9.4 Z" fill="#9a9a9a"/><path d="M7.8 7 L11 5.8 L11 9.4 L7.8 11.2 Z" fill="#b0b0b0"/></svg><svg style="left:1228px;top:584px" width="16" height="16" viewBox="0 0 16 16"><path d="M8 1 L15 3.6 L15 11.6 L8 15 L1 11.6 L1 3.6 Z" fill="#8a3e3e"/><path d="M8 1.5 L14.5 3.9 L8 6.5 L1.5 3.9 Z" fill="#a64c4c"/><path d="M1 3.6 L8 6.5 L15 3.6 M8 6.5 L8 15" stroke="#5a2a2a" stroke-width="0.7" fill="none"/></svg><div class="a" style="left:1195px;top:581px;width:1px;height:363px;background:#353535;"></div><div class="a" style="left:1223px;top:581px;width:1px;height:363px;background:#3a3a3a;"></div><div class="a" style="left:902px;top:603px;width:350px;height:22px;background:#464646;"></div><div class="a" style="left:902px;top:625px;width:350px;height:22px;background:#3d3d3d;"></div><div class="a" style="left:902px;top:647px;width:350px;height:22px;background:#464646;"></div><div class="a" style="left:902px;top:669px;width:350px;height:22px;background:#3d3d3d;"></div><div class="a" style="left:902px;top:691px;width:350px;height:22px;background:#464646;"></div><div class="a" style="left:902px;top:713px;width:350px;height:22px;background:#3d3d3d;"></div><div class="a" style="left:902px;top:735px;width:350px;height:22px;background:#464646;"></div><div class="a" style="left:902px;top:757px;width:350px;height:22px;background:#3d3d3d;"></div><div class="a" style="left:902px;top:779px;width:350px;height:22px;background:#464646;"></div><div class="a" style="left:902px;top:801px;width:350px;height:22px;background:#3d3d3d;"></div><div class="a" style="left:902px;top:823px;width:350px;height:22px;background:#464646;"></div><div class="a" style="left:902px;top:845px;width:350px;height:22px;background:#3d3d3d;"></div><div class="a" style="left:902px;top:867px;width:350px;height:22px;background:#464646;"></div><div class="a" style="left:902px;top:889px;width:350px;height:22px;background:#3d3d3d;"></div><div class="a" style="left:902px;top:911px;width:350px;height:22px;background:#464646;"></div><div class="a" style="left:902px;top:933px;width:350px;height:11px;background:#3d3d3d;"></div><div class="a" style="left:1195px;top:603px;width:1px;height:341px;background:#3c3c3c;"></div><div class="a" style="left:1223px;top:603px;width:1px;height:341px;background:#3e3e3e;"></div><svg style="left:909px;top:611px" width="8" height="7"><path d="M0.5 0.8 L6.8 0.8 L3.65 5.8 Z" fill="#8a8a8a"/></svg><svg style="left:1200px;top:607px" width="15" height="15" viewBox="0 0 15 15"><path d="M7.5 0.8 L14 2.8 L13.6 10.5 L7.5 14.3 L1.4 10.5 L1 2.8 Z" fill="#787878" stroke="#3c3c3c" stroke-width="0.6"/><path d="M7.5 3.2 L11.6 4.7 L11.6 9.7 L7.5 12 L3.4 9.7 L3.4 4.7 Z" fill="#4a4a4a"/><path d="M7.5 4 L11 5.2 L7.5 6.5 L4 5.2 Z" fill="#8e8e8e"/><path d="M4 5.8 L7.2 7 L7.2 11.2 L4 9.4 Z" fill="#6c6c6c"/><path d="M7.8 7 L11 5.8 L11 9.4 L7.8 11.2 Z" fill="#787878"/></svg><div class="t" style="left:925.30px;top:609.00px;font-size:11.5px;color:#dedede;transform:scaleX(0.8413);">GAFFERBOT</div><svg style="left:929px;top:633px" width="8" height="7"><path d="M0.5 0.8 L6.8 0.8 L3.65 5.8 Z" fill="#8a8a8a"/></svg><svg style="left:1200px;top:629px" width="15" height="15" viewBox="0 0 15 15"><path d="M7.5 0.8 L14 2.8 L13.6 10.5 L7.5 14.3 L1.4 10.5 L1 2.8 Z" fill="#787878" stroke="#3c3c3c" stroke-width="0.6"/><path d="M7.5 3.2 L11.6 4.7 L11.6 9.7 L7.5 12 L3.4 9.7 L3.4 4.7 Z" fill="#4a4a4a"/><path d="M7.5 4 L11 5.2 L7.5 6.5 L4 5.2 Z" fill="#8e8e8e"/><path d="M4 5.8 L7.2 7 L7.2 11.2 L4 9.4 Z" fill="#6c6c6c"/><path d="M7.8 7 L11 5.8 L11 9.4 L7.8 11.2 Z" fill="#787878"/></svg><div class="t" style="left:945.30px;top:631.00px;font-size:11.5px;color:#dedede;transform:scaleX(0.8726);">C_torso_GRP</div><svg style="left:949px;top:655px" width="8" height="7"><path d="M0.5 0.8 L6.8 0.8 L3.65 5.8 Z" fill="#8a8a8a"/></svg><svg style="left:1200px;top:651px" width="15" height="15" viewBox="0 0 15 15"><path d="M7.5 0.8 L14 2.8 L13.6 10.5 L7.5 14.3 L1.4 10.5 L1 2.8 Z" fill="#787878" stroke="#3c3c3c" stroke-width="0.6"/><path d="M7.5 3.2 L11.6 4.7 L11.6 9.7 L7.5 12 L3.4 9.7 L3.4 4.7 Z" fill="#4a4a4a"/><path d="M7.5 4 L11 5.2 L7.5 6.5 L4 5.2 Z" fill="#8e8e8e"/><path d="M4 5.8 L7.2 7 L7.2 11.2 L4 9.4 Z" fill="#6c6c6c"/><path d="M7.8 7 L11 5.8 L11 9.4 L7.8 11.2 Z" fill="#787878"/></svg><div class="t" style="left:965.30px;top:653.00px;font-size:11.5px;color:#dedede;transform:scaleX(0.8548);">C_key_GRP</div><svg style="left:969px;top:677px" width="8" height="7"><path d="M0.5 0.8 L6.8 0.8 L3.65 5.8 Z" fill="#8a8a8a"/></svg><svg style="left:1200px;top:673px" width="15" height="15" viewBox="0 0 15 15"><path d="M7.5 0.8 L14 2.8 L13.6 10.5 L7.5 14.3 L1.4 10.5 L1 2.8 Z" fill="#787878" stroke="#3c3c3c" stroke-width="0.6"/><path d="M7.5 3.2 L11.6 4.7 L11.6 9.7 L7.5 12 L3.4 9.7 L3.4 4.7 Z" fill="#4a4a4a"/><path d="M7.5 4 L11 5.2 L7.5 6.5 L4 5.2 Z" fill="#8e8e8e"/><path d="M4 5.8 L7.2 7 L7.2 11.2 L4 9.4 Z" fill="#6c6c6c"/><path d="M7.8 7 L11 5.8 L11 9.4 L7.8 11.2 Z" fill="#787878"/></svg><div class="t" style="left:985.30px;top:675.00px;font-size:11.5px;color:#dedede;transform:scaleX(0.8500);">C_key_CPT</div><div class="t" style="left:1005.30px;top:697.00px;font-size:11.5px;color:#dedede;transform:scaleX(0.8933);">C_key001_REN</div><div class="t" style="left:1005.30px;top:719.00px;font-size:11.5px;color:#dedede;transform:scaleX(0.8933);">C_key002_REN</div><svg style="left:949px;top:743px" width="8" height="7"><path d="M0.5 0.8 L6.8 0.8 L3.65 5.8 Z" fill="#8a8a8a"/></svg><svg style="left:1200px;top:739px" width="15" height="15" viewBox="0 0 15 15"><path d="M7.5 0.8 L14 2.8 L13.6 10.5 L7.5 14.3 L1.4 10.5 L1 2.8 Z" fill="#787878" stroke="#3c3c3c" stroke-width="0.6"/><path d="M7.5 3.2 L11.6 4.7 L11.6 9.7 L7.5 12 L3.4 9.7 L3.4 4.7 Z" fill="#4a4a4a"/><path d="M7.5 4 L11 5.2 L7.5 6.5 L4 5.2 Z" fill="#8e8e8e"/><path d="M4 5.8 L7.2 7 L7.2 11.2 L4 9.4 Z" fill="#6c6c6c"/><path d="M7.8 7 L11 5.8 L11 9.4 L7.8 11.2 Z" fill="#787878"/></svg><div class="t" style="left:965.30px;top:741.00px;font-size:11.5px;color:#dedede;transform:scaleX(0.8927);">R_armUpper_GRP</div><svg style="left:969px;top:765px" width="8" height="7"><path d="M0.5 0.8 L6.8 0.8 L3.65 5.8 Z" fill="#8a8a8a"/></svg><svg style="left:1200px;top:761px" width="15" height="15" viewBox="0 0 15 15"><path d="M7.5 0.8 L14 2.8 L13.6 10.5 L7.5 14.3 L1.4 10.5 L1 2.8 Z" fill="#787878" stroke="#3c3c3c" stroke-width="0.6"/><path d="M7.5 3.2 L11.6 4.7 L11.6 9.7 L7.5 12 L3.4 9.7 L3.4 4.7 Z" fill="#4a4a4a"/><path d="M7.5 4 L11 5.2 L7.5 6.5 L4 5.2 Z" fill="#8e8e8e"/><path d="M4 5.8 L7.2 7 L7.2 11.2 L4 9.4 Z" fill="#6c6c6c"/><path d="M7.8 7 L11 5.8 L11 9.4 L7.8 11.2 Z" fill="#787878"/></svg><div class="t" style="left:985.30px;top:763.00px;font-size:11.5px;color:#dedede;transform:scaleX(0.8927);">R_armLower_GRP</div><svg style="left:989px;top:787px" width="8" height="7"><path d="M0.5 0.8 L6.8 0.8 L3.65 5.8 Z" fill="#8a8a8a"/></svg><svg style="left:1200px;top:783px" width="15" height="15" viewBox="0 0 15 15"><path d="M7.5 0.8 L14 2.8 L13.6 10.5 L7.5 14.3 L1.4 10.5 L1 2.8 Z" fill="#787878" stroke="#3c3c3c" stroke-width="0.6"/><path d="M7.5 3.2 L11.6 4.7 L11.6 9.7 L7.5 12 L3.4 9.7 L3.4 4.7 Z" fill="#4a4a4a"/><path d="M7.5 4 L11 5.2 L7.5 6.5 L4 5.2 Z" fill="#8e8e8e"/><path d="M4 5.8 L7.2 7 L7.2 11.2 L4 9.4 Z" fill="#6c6c6c"/><path d="M7.8 7 L11 5.8 L11 9.4 L7.8 11.2 Z" fill="#787878"/></svg><div class="t" style="left:1005.30px;top:785.00px;font-size:11.5px;color:#dedede;transform:scaleX(0.9128);">R_clawBottom_GRP</div><svg style="left:1009px;top:809px" width="8" height="7"><path d="M0.5 0.8 L6.8 0.8 L3.65 5.8 Z" fill="#8a8a8a"/></svg><svg style="left:1200px;top:805px" width="15" height="15" viewBox="0 0 15 15"><path d="M7.5 0.8 L14 2.8 L13.6 10.5 L7.5 14.3 L1.4 10.5 L1 2.8 Z" fill="#787878" stroke="#3c3c3c" stroke-width="0.6"/><path d="M7.5 3.2 L11.6 4.7 L11.6 9.7 L7.5 12 L3.4 9.7 L3.4 4.7 Z" fill="#4a4a4a"/><path d="M7.5 4 L11 5.2 L7.5 6.5 L4 5.2 Z" fill="#8e8e8e"/><path d="M4 5.8 L7.2 7 L7.2 11.2 L4 9.4 Z" fill="#6c6c6c"/><path d="M7.8 7 L11 5.8 L11 9.4 L7.8 11.2 Z" fill="#787878"/></svg><div class="t" style="left:1025.30px;top:807.00px;font-size:11.5px;color:#dedede;transform:scaleX(0.9121);">R_clawBottom_CPT</div><div class="t" style="left:1045.30px;top:829.00px;font-size:11.5px;color:#dedede;transform:scaleX(0.9274);">R_clawBottom001_REN</div><svg style="left:989px;top:853px" width="8" height="7"><path d="M0.5 0.8 L6.8 0.8 L3.65 5.8 Z" fill="#8a8a8a"/></svg><svg style="left:1200px;top:849px" width="15" height="15" viewBox="0 0 15 15"><path d="M7.5 0.8 L14 2.8 L13.6 10.5 L7.5 14.3 L1.4 10.5 L1 2.8 Z" fill="#787878" stroke="#3c3c3c" stroke-width="0.6"/><path d="M7.5 3.2 L11.6 4.7 L11.6 9.7 L7.5 12 L3.4 9.7 L3.4 4.7 Z" fill="#4a4a4a"/><path d="M7.5 4 L11 5.2 L7.5 6.5 L4 5.2 Z" fill="#8e8e8e"/><path d="M4 5.8 L7.2 7 L7.2 11.2 L4 9.4 Z" fill="#6c6c6c"/><path d="M7.8 7 L11 5.8 L11 9.4 L7.8 11.2 Z" fill="#787878"/></svg><div class="t" style="left:1005.30px;top:851.00px;font-size:11.5px;color:#dedede;transform:scaleX(0.8742);">R_clawTop_GRP</div><svg style="left:1009px;top:875px" width="8" height="7"><path d="M0.5 0.8 L6.8 0.8 L3.65 5.8 Z" fill="#8a8a8a"/></svg><svg style="left:1200px;top:871px" width="15" height="15" viewBox="0 0 15 15"><path d="M7.5 0.8 L14 2.8 L13.6 10.5 L7.5 14.3 L1.4 10.5 L1 2.8 Z" fill="#787878" stroke="#3c3c3c" stroke-width="0.6"/><path d="M7.5 3.2 L11.6 4.7 L11.6 9.7 L7.5 12 L3.4 9.7 L3.4 4.7 Z" fill="#4a4a4a"/><path d="M7.5 4 L11 5.2 L7.5 6.5 L4 5.2 Z" fill="#8e8e8e"/><path d="M4 5.8 L7.2 7 L7.2 11.2 L4 9.4 Z" fill="#6c6c6c"/><path d="M7.8 7 L11 5.8 L11 9.4 L7.8 11.2 Z" fill="#787878"/></svg><div class="t" style="left:1025.30px;top:873.00px;font-size:11.5px;color:#dedede;transform:scaleX(0.8724);">R_clawTop_CPT</div><div class="t" style="left:1045.30px;top:895.00px;font-size:11.5px;color:#dedede;transform:scaleX(0.8961);">R_clawTop001_REN</div><svg style="left:989px;top:919px" width="8" height="7"><path d="M0.5 0.8 L6.8 0.8 L3.65 5.8 Z" fill="#8a8a8a"/></svg><svg style="left:1200px;top:915px" width="15" height="15" viewBox="0 0 15 15"><path d="M7.5 0.8 L14 2.8 L13.6 10.5 L7.5 14.3 L1.4 10.5 L1 2.8 Z" fill="#787878" stroke="#3c3c3c" stroke-width="0.6"/><path d="M7.5 3.2 L11.6 4.7 L11.6 9.7 L7.5 12 L3.4 9.7 L3.4 4.7 Z" fill="#4a4a4a"/><path d="M7.5 4 L11 5.2 L7.5 6.5 L4 5.2 Z" fill="#8e8e8e"/><path d="M4 5.8 L7.2 7 L7.2 11.2 L4 9.4 Z" fill="#6c6c6c"/><path d="M7.8 7 L11 5.8 L11 9.4 L7.8 11.2 Z" fill="#787878"/></svg><div class="t" style="left:1005.30px;top:917.00px;font-size:11.5px;color:#dedede;transform:scaleX(0.8924);">R_armLower_CPT</div><div class="a" style="left:902px;top:933px;width:350px;height:11px;overflow:hidden"><div class="t" style="left:123.30px;top:6.00px;font-size:11.5px;color:#dedede;transform:scaleX(0.9097);">R_armLower007_REN</div></div><div class="a" style="left:1252px;top:581px;width:15px;height:362px;background:#474747;"></div><div class="a" style="left:1256px;top:585px;width:8px;height:329px;background:#3b3b3b;border-radius:4px"></div><div class="a" style="left:1256px;top:585px;width:8px;height:38px;background:#5f5f5f;border-radius:4px"></div><svg style="left:1256px;top:919px" width="8" height="8"><path d="M0.5 6.5 L7.5 6.5 L4 0.5 Z" fill="#9a9a9a"/></svg><svg style="left:1256px;top:933px" width="8" height="8"><path d="M0.5 0.8 L7.5 0.8 L4 6.5 Z" fill="#9a9a9a"/></svg><div class="a" style="left:6px;top:956px;width:1268px;height:33px;background:#434343;border-top:1px solid #4c4c4c;border-left:1px solid #4c4c4c;border-radius:3px"></div><svg style="left:858px;top:507px" width="22" height="22" viewBox="0 0 22 22"><path d="M3.5 2.5 L18 2.5 Q19.5 2.5 19.5 4 L19.5 13.8 Q19.5 15.3 18 15.3 L13.2 15.3 L10.8 19.6 L8.6 15.3 L3.5 15.3 Q2 15.3 2 13.8 L2 4 Q2 2.5 3.5 2.5 Z" fill="#7a7a7a"/><rect x="4" y="5" width="15" height="1.6" fill="#555"/><rect x="4" y="8" width="15" height="1.6" fill="#555"/><rect x="4" y="11" width="8" height="1.6" fill="#555"/></svg><div class="a" style="left:385px;top:694px;width:126px;height:58px;background:#e0e0e0;border-radius:6px"></div><svg style="left:496px;top:680px" width="30" height="30" viewBox="0 0 30 30"><circle cx="15" cy="14" r="13.2" fill="#e0e0e0"/><circle cx="15" cy="14" r="7" fill="#e0e0e0" stroke="#222" stroke-width="4"/></svg><div class="a" style="left:393px;top:702px;width:110px;height:42px;background:#799ec2;border:1.8px solid #2a2c2e;border-radius:4px"></div><div class="t" style="left:411.00px;top:718.00px;font-size:11.5px;color:#ececec;font-weight:bold;transform:scaleX(1.0086);">SceneReader</div><div class="a" style="left:443px;top:739px;width:10px;height:10px;border-radius:50%;background:#3d5f8c;border:1px solid #27374d"></div><div class="a" style="left:12px;top:961.5px;width:3px;height:3px;border-radius:50%;background:#3a3a3a"></div><div class="a" style="left:12px;top:967.5px;width:3px;height:3px;border-radius:50%;background:#3a3a3a"></div><div class="a" style="left:12px;top:973.5px;width:3px;height:3px;border-radius:50%;background:#3a3a3a"></div><div class="a" style="left:18px;top:960.5px;width:34px;height:16.5px;background:#5c5c5c;border-radius:3px;border-bottom:1px solid #393939"></div><div class="t" style="left:21.80px;top:964.00px;font-size:11.5px;color:#e4e4e4;transform:scaleX(0.7686);">1</div><div class="a" style="left:56px;top:960.5px;width:33px;height:16.5px;background:#5c5c5c;border-radius:3px;border-bottom:1px solid #393939"></div><div class="t" style="left:59.40px;top:964.00px;font-size:11.5px;color:#e4e4e4;transform:scaleX(0.7843);">1</div><div class="a" style="left:92px;top:960px;width:2px;height:18px;background:#f2d21a;"></div><div class="t" style="left:98.80px;top:964.00px;font-size:11.5px;color:#e8cc2a;transform:scaleX(0.8000);">1</div><div class="a" style="left:100.8px;top:972.7px;width:2px;height:5px;background:#252525"></div><div class="a" style="left:111.1px;top:972.7px;width:2px;height:5px;background:#252525"></div><div class="a" style="left:121.4px;top:972.7px;width:2px;height:5px;background:#252525"></div><div class="a" style="left:131.6px;top:972.7px;width:2px;height:5px;background:#252525"></div><div class="a" style="left:141.9px;top:967.7px;width:2px;height:10px;background:#252525"></div><div class="a" style="left:152.2px;top:972.7px;width:2px;height:5px;background:#252525"></div><div class="a" style="left:162.5px;top:972.7px;width:2px;height:5px;background:#252525"></div><div class="a" style="left:172.8px;top:972.7px;width:2px;height:5px;background:#252525"></div><div class="a" style="left:183.0px;top:972.7px;width:2px;height:5px;background:#252525"></div><div class="a" style="left:193.3px;top:963.7px;width:2px;height:14px;background:#252525"></div><div class="a" style="left:203.6px;top:972.7px;width:2px;height:5px;background:#252525"></div><div class="a" style="left:213.9px;top:972.7px;width:2px;height:5px;background:#252525"></div><div class="a" style="left:224.2px;top:972.7px;width:2px;height:5px;background:#252525"></div><div class="a" style="left:234.4px;top:972.7px;width:2px;height:5px;background:#252525"></div><div class="a" style="left:244.7px;top:967.7px;width:2px;height:10px;background:#252525"></div><div class="a" style="left:255.0px;top:972.7px;width:2px;height:5px;background:#252525"></div><div class="a" style="left:265.3px;top:972.7px;width:2px;height:5px;background:#252525"></div><div class="a" style="left:275.6px;top:972.7px;width:2px;height:5px;background:#252525"></div><div class="a" style="left:285.8px;top:972.7px;width:2px;height:5px;background:#252525"></div><div class="a" style="left:296.1px;top:963.7px;width:2px;height:14px;background:#252525"></div><div class="a" style="left:306.4px;top:972.7px;width:2px;height:5px;background:#252525"></div><div class="a" style="left:316.7px;top:972.7px;width:2px;height:5px;background:#252525"></div><div class="a" style="left:327.0px;top:972.7px;width:2px;height:5px;background:#252525"></div><div class="a" style="left:337.2px;top:972.7px;width:2px;height:5px;background:#252525"></div><div class="a" style="left:347.5px;top:967.7px;width:2px;height:10px;background:#252525"></div><div class="a" style="left:357.8px;top:972.7px;width:2px;height:5px;background:#252525"></div><div class="a" style="left:368.1px;top:972.7px;width:2px;height:5px;background:#252525"></div><div class="a" style="left:378.4px;top:972.7px;width:2px;height:5px;background:#252525"></div><div class="a" style="left:388.6px;top:972.7px;width:2px;height:5px;background:#252525"></div><div class="a" style="left:398.9px;top:963.7px;width:2px;height:14px;background:#252525"></div><div class="a" style="left:409.2px;top:972.7px;width:2px;height:5px;background:#252525"></div><div class="a" style="left:419.5px;top:972.7px;width:2px;height:5px;background:#252525"></div><div class="a" style="left:429.8px;top:972.7px;width:2px;height:5px;background:#252525"></div><div class="a" style="left:440.0px;top:972.7px;width:2px;height:5px;background:#252525"></div><div class="a" style="left:450.3px;top:967.7px;width:2px;height:10px;background:#252525"></div><div class="a" style="left:460.6px;top:972.7px;width:2px;height:5px;background:#252525"></div><div class="a" style="left:470.9px;top:972.7px;width:2px;height:5px;background:#252525"></div><div class="a" style="left:481.2px;top:972.7px;width:2px;height:5px;background:#252525"></div><div class="a" style="left:491.4px;top:972.7px;width:2px;height:5px;background:#252525"></div><div class="a" style="left:501.7px;top:963.7px;width:2px;height:14px;background:#252525"></div><div class="a" style="left:512.0px;top:972.7px;width:2px;height:5px;background:#252525"></div><div class="a" style="left:522.3px;top:972.7px;width:2px;height:5px;background:#252525"></div><div class="a" style="left:532.6px;top:972.7px;width:2px;height:5px;background:#252525"></div><div class="a" style="left:542.8px;top:972.7px;width:2px;height:5px;background:#252525"></div><div class="a" style="left:553.1px;top:967.7px;width:2px;height:10px;background:#252525"></div><div class="a" style="left:563.4px;top:972.7px;width:2px;height:5px;background:#252525"></div><div class="a" style="left:573.7px;top:972.7px;width:2px;height:5px;background:#252525"></div><div class="a" style="left:584.0px;top:972.7px;width:2px;height:5px;background:#252525"></div><div class="a" style="left:594.2px;top:972.7px;width:2px;height:5px;background:#252525"></div><div class="a" style="left:604.5px;top:963.7px;width:2px;height:14px;background:#252525"></div><div class="a" style="left:614.8px;top:972.7px;width:2px;height:5px;background:#252525"></div><div class="a" style="left:625.1px;top:972.7px;width:2px;height:5px;background:#252525"></div><div class="a" style="left:635.4px;top:972.7px;width:2px;height:5px;background:#252525"></div><div class="a" style="left:645.6px;top:972.7px;width:2px;height:5px;background:#252525"></div><div class="a" style="left:655.9px;top:967.7px;width:2px;height:10px;background:#252525"></div><div class="a" style="left:666.2px;top:972.7px;width:2px;height:5px;background:#252525"></div><div class="a" style="left:676.5px;top:972.7px;width:2px;height:5px;background:#252525"></div><div class="a" style="left:686.8px;top:972.7px;width:2px;height:5px;background:#252525"></div><div class="a" style="left:697.0px;top:972.7px;width:2px;height:5px;background:#252525"></div><div class="a" style="left:707.3px;top:963.7px;width:2px;height:14px;background:#252525"></div><div class="a" style="left:717.6px;top:972.7px;width:2px;height:5px;background:#252525"></div><div class="a" style="left:727.9px;top:972.7px;width:2px;height:5px;background:#252525"></div><div class="a" style="left:738.2px;top:972.7px;width:2px;height:5px;background:#252525"></div><div class="a" style="left:748.4px;top:972.7px;width:2px;height:5px;background:#252525"></div><div class="a" style="left:758.7px;top:967.7px;width:2px;height:10px;background:#252525"></div><div class="a" style="left:769.0px;top:972.7px;width:2px;height:5px;background:#252525"></div><div class="a" style="left:779.3px;top:972.7px;width:2px;height:5px;background:#252525"></div><div class="a" style="left:789.6px;top:972.7px;width:2px;height:5px;background:#252525"></div><div class="a" style="left:799.8px;top:972.7px;width:2px;height:5px;background:#252525"></div><div class="a" style="left:810.1px;top:963.7px;width:2px;height:14px;background:#252525"></div><div class="a" style="left:820.4px;top:972.7px;width:2px;height:5px;background:#252525"></div><div class="a" style="left:830.7px;top:972.7px;width:2px;height:5px;background:#252525"></div><div class="a" style="left:841.0px;top:972.7px;width:2px;height:5px;background:#252525"></div><div class="a" style="left:851.2px;top:972.7px;width:2px;height:5px;background:#252525"></div><div class="a" style="left:861.5px;top:967.7px;width:2px;height:10px;background:#252525"></div><div class="a" style="left:871.8px;top:972.7px;width:2px;height:5px;background:#252525"></div><div class="a" style="left:882.1px;top:972.7px;width:2px;height:5px;background:#252525"></div><div class="a" style="left:892.4px;top:972.7px;width:2px;height:5px;background:#252525"></div><div class="a" style="left:902.6px;top:972.7px;width:2px;height:5px;background:#252525"></div><div class="a" style="left:912.9px;top:963.7px;width:2px;height:14px;background:#252525"></div><div class="a" style="left:923.2px;top:972.7px;width:2px;height:5px;background:#252525"></div><div class="a" style="left:933.5px;top:972.7px;width:2px;height:5px;background:#252525"></div><div class="a" style="left:943.8px;top:972.7px;width:2px;height:5px;background:#252525"></div><div class="a" style="left:954.0px;top:972.7px;width:2px;height:5px;background:#252525"></div><div class="a" style="left:964.3px;top:967.7px;width:2px;height:10px;background:#252525"></div><div class="a" style="left:974.6px;top:972.7px;width:2px;height:5px;background:#252525"></div><div class="a" style="left:984.9px;top:972.7px;width:2px;height:5px;background:#252525"></div><div class="a" style="left:995.2px;top:972.7px;width:2px;height:5px;background:#252525"></div><div class="a" style="left:1005.4px;top:972.7px;width:2px;height:5px;background:#252525"></div><div class="a" style="left:1015.7px;top:963.7px;width:2px;height:14px;background:#252525"></div><div class="a" style="left:1026.0px;top:972.7px;width:2px;height:5px;background:#252525"></div><div class="a" style="left:1036.3px;top:972.7px;width:2px;height:5px;background:#252525"></div><div class="a" style="left:1046.6px;top:972.7px;width:2px;height:5px;background:#252525"></div><div class="a" style="left:1056.8px;top:972.7px;width:2px;height:5px;background:#252525"></div><div class="a" style="left:1067.1px;top:967.7px;width:2px;height:10px;background:#252525"></div><div class="a" style="left:1077.4px;top:972.7px;width:2px;height:5px;background:#252525"></div><div class="a" style="left:1087.7px;top:972.7px;width:2px;height:5px;background:#252525"></div><div class="a" style="left:1098.0px;top:972.7px;width:2px;height:5px;background:#252525"></div><div class="a" style="left:1108.2px;top:972.7px;width:2px;height:5px;background:#252525"></div><svg style="left:1112px;top:961px" width="38" height="16" viewBox="0 0 38 16"><rect x="1.8" y="1.5" width="1.6" height="12.5" fill="#9a9a9a"/><path d="M3.2 7.8 L8.6 2.5 L8.6 13 Z" fill="#9a9a9a"/><path d="M13 2 L23 7.8 L13 13.6 L15.5 7.8 Z" fill="#9a9a9a"/><rect x="33.5" y="1.5" width="1.6" height="12.5" fill="#9a9a9a"/><path d="M33.7 7.8 L28.3 2.5 L28.3 13 Z" fill="#9a9a9a"/></svg><div class="a" style="left:1152px;top:960.5px;width:42px;height:16.5px;background:#5c5c5c;border-radius:3px;border-bottom:1px solid #393939"></div><div class="t" style="left:1155.50px;top:964.00px;font-size:11.5px;color:#e4e4e4;transform:scaleX(0.8000);">1</div><div class="a" style="left:1198px;top:960.5px;width:32px;height:16.5px;background:#5c5c5c;border-radius:3px;border-bottom:1px solid #393939"></div><div class="t" style="left:1201.50px;top:964.00px;font-size:11.5px;color:#e4e4e4;transform:scaleX(0.9610);">100</div><div class="a" style="left:1235px;top:960.5px;width:33px;height:16.5px;background:#5c5c5c;border-radius:3px;border-bottom:1px solid #393939"></div><div class="t" style="left:1238.20px;top:964.00px;font-size:11.5px;color:#e4e4e4;transform:scaleX(0.9610);">100</div>
</body></html>
